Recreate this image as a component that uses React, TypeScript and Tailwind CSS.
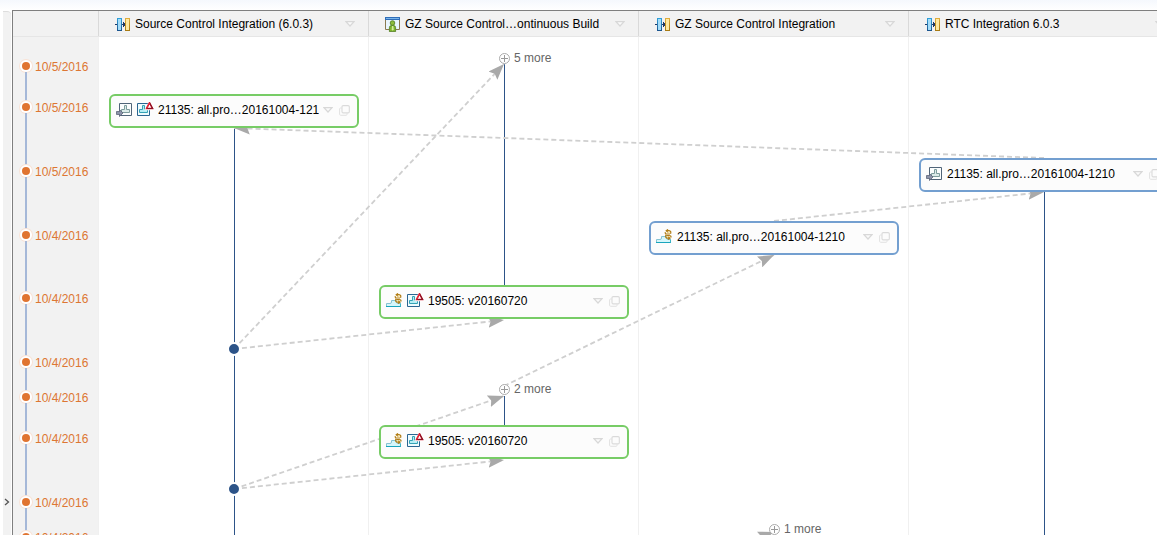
import type { ReactNode } from "react";

type IconKind = "deliver" | "warning" | "baseline";

function IntegrationIcon() {
  return (
    <svg width="16" height="16" viewBox="0 0 16 16" className="shrink-0" shapeRendering="crispEdges" aria-hidden="true">
      <defs>
        <linearGradient id="blueBar" x1="0" y1="0" x2="0" y2="1">
          <stop offset="0" stopColor="#2f9fd8" />
          <stop offset="1" stopColor="#1d5790" />
        </linearGradient>
        <linearGradient id="goldBar" x1="0" y1="0" x2="0" y2="1">
          <stop offset="0" stopColor="#e0ac3c" />
          <stop offset="1" stopColor="#a87b14" />
        </linearGradient>
      </defs>
      <path d="M0 8h3v1H0z" fill="#1f3864" />
      <rect x="2.5" y="2.5" width="4" height="12" fill="#a5dcf8" stroke="url(#blueBar)" />
      <rect x="10.5" y="2.5" width="4" height="12" fill="#ffe9a0" stroke="url(#goldBar)" />
      <path d="M7 8h3v1H7zM8 6h1v5H8zM9 7h1v3H9z" fill="#1f3864" />
    </svg>
  );
}

function StreamIcon() {
  return (
    <svg width="16" height="16" viewBox="0 0 16 16" className="shrink-0" aria-hidden="true">
      <path d="M.5 1.500h14v12H.5z" fill="#e9f5fd" stroke="#8a7a50" />
      <path d="M0 1h15v3H0z" fill="#2f6db8" />
      <path d="M1 2h13v1H1z" fill="#79b4ea" />
      <path d="M4 13h7v2H4z" fill="#f2f2f2" />
      <path d="M4.400 15.600v-4q0-2 2-2h2.200q2 0 2 2v4z" fill="#7fb52e" stroke="#4c7a1c" strokeWidth=".8" />
      <circle cx="7.500" cy="7" r="2.300" fill="#8cbc3c" stroke="#4c7a1c" strokeWidth=".8" />
      <path d="M7 10h1.300l.4 3.500-1 1.200-1-1.200z" fill="#d5ee9c" />
    </svg>
  );
}

function DeliverIcon() {
  return (
    <svg width="16" height="16" viewBox="0 0 16 16" className="shrink-0" aria-hidden="true">
      <path d="M3.500 1.500h12v12h-12z" fill="#fbfdfd" stroke="#506478" />
      <path d="M8.500 3.500h2v4h3v3h-8v-3h3z" fill="#dcebe9" stroke="#7d9c9c" />
      <path d="M.5 9.500h3v-2l3.500 3.500-3.500 3.500v-2h-3z" fill="#8c93a8" stroke="#5c6378" strokeWidth=".8" />
    </svg>
  );
}

function WarningIcon() {
  return (
    <svg width="17" height="16" viewBox="0 0 17 16" className="-mr-px shrink-0" aria-hidden="true">
      <path d="M.5 1.500h12v12H.5z" fill="#effbfd" stroke="#2b6591" />
      <path d="M5.500 3.500h2v4h3v3h-8v-3h3z" fill="#b5edf4" stroke="#35a2b5" />
      <path d="M12.500 1l3.300 6H9.200z" fill="#fff" stroke="#fff" strokeWidth="2.500" />
      <path d="M12.500.8l3 5.700h-6z" fill="#fff" stroke="#d51a2e" strokeWidth="1.400" />
      <path d="M12.600 .8l3 5.700h-6" fill="none" stroke="#8c1224" strokeWidth="1.200" />
      <path d="M12.500 .8l-3 5.700" stroke="#e3263a" strokeWidth="1.400" />
    </svg>
  );
}

function BaselineIcon() {
  return (
    <svg width="16" height="16" viewBox="0 0 16 16" className="shrink-0" aria-hidden="true">
      <path d="M.5 13.500v-3H4q1.500 0 1.500-1.500V7.500h5V9q0 1.500 1.500 1.500h2.500v3z" fill="#d5f6fa" stroke="#86c3d2" />
      <path d="M0 13h15v1H0z" fill="#1aa5bd" />
      <path d="M14.500 10.500v3" stroke="#3db4c7" />
      <path
        d="M14.500 4.800Q15.500 2 13 1.700H10.500M12 .4L10.200 1.800 12 3.400M9.300 3.200Q9 5 11 5H14M10 5.800Q8.800 9.200 11.500 9.200H13M12.200 7.600L14 9.200 12.200 10.600M15 8.500Q15.300 6.500 13 6.500H10.500"
        fill="none"
        stroke="#b17d15"
        strokeWidth="1.200"
      />
      <path d="M11.500 3.300h2M11 7.800h1.500" stroke="#f8d774" />
    </svg>
  );
}

function Triangle() {
  return (
    <svg width="10" height="6" viewBox="0 0 10 6" className="block" aria-hidden="true">
      <path d="M1 .7h8L5 5z" fill="#fafafa" stroke="#d8d8d8" strokeWidth="1.200" />
    </svg>
  );
}

function CopyIcon() {
  return (
    <svg width="11" height="11" viewBox="0 0 11 11" className="block" aria-hidden="true">
      <rect x="3" y=".6" width="7.300" height="7.300" rx="1.200" fill="none" stroke="#dadada" strokeWidth="1.100" />
      <path d="M3 3H1.600Q.6 3 .6 4v5.300q0 1 1 1H7q1 0 1-1V8" fill="none" stroke="#e2e2e2" />
    </svg>
  );
}

const icons: Record<IconKind, ReactNode> = {
  deliver: <DeliverIcon />,
  warning: <WarningIcon />,
  baseline: <BaselineIcon />,
};

const columns = [
  { title: "Source Control Integration (6.0.3)", icon: <IntegrationIcon /> },
  { title: "GZ Source Control…ontinuous Build", icon: <StreamIcon /> },
  { title: "GZ Source Control Integration", icon: <IntegrationIcon /> },
  { title: "RTC Integration 6.0.3", icon: <IntegrationIcon /> },
];

const dates = [
  { label: "10/5/2016", row: "h-[41px]" },
  { label: "10/5/2016", row: "h-16" },
  { label: "10/5/2016", row: "h-16" },
  { label: "10/4/2016", row: "h-[63px]" },
  { label: "10/4/2016", row: "h-16" },
  { label: "10/4/2016", row: "h-[35px]" },
  { label: "10/4/2016", row: "h-[41px]" },
  { label: "10/4/2016", row: "h-16" },
  { label: "10/4/2016", row: "h-[35px]" },
  { label: "10/4/2016", row: "h-16" },
];

const cards: { label: string; icons: IconKind[]; place: string; color: string }[] = [
  { label: "21135: all.pro…20161004-1210", icons: ["deliver", "warning"], place: "left-[11px] top-[57px]", color: "border-[#77cc66]" },
  { label: "21135: all.pro…20161004-1210", icons: ["deliver"], place: "left-[821px] top-[121px]", color: "border-[#739fd0]" },
  { label: "21135: all.pro…20161004-1210", icons: ["baseline"], place: "left-[551px] top-[184px]", color: "border-[#739fd0]" },
  { label: "19505: v20160720", icons: ["baseline", "warning"], place: "left-[281px] top-[248px]", color: "border-[#77cc66]" },
  { label: "19505: v20160720", icons: ["baseline", "warning"], place: "left-[281px] top-[388px]", color: "border-[#77cc66]" },
];

const groups = [
  { label: "5 more", place: "left-[401px] top-[13px]" },
  { label: "2 more", place: "left-[401px] top-[344px]" },
  { label: "1 more", place: "left-[671px] top-[484px]" },
];

const flows = [
  "M136 312L406 27",
  "M136 312L406 283",
  "M946 121L136 91",
  "M676 184L946 155",
  "M406 349L676 218",
  "M136 452L406 359",
  "M136 452L406 423",
  "M406 590L676 495",
];

function FlowLines() {
  return (
    <svg width="1080" height="600" className="absolute left-0 top-0" aria-hidden="true">
      <defs>
        <marker id="arrow" markerWidth="16" markerHeight="12" refX="16" refY="6" orient="auto" markerUnits="userSpaceOnUse">
          <path d="M0 0L16 6L0 12L2.500 6z" fill="#a9a9a9" />
        </marker>
      </defs>
      <path d="M136.500 91V600M406.500 27V250M406.500 359V390M946.500 153V600" stroke="#2d5488" fill="none" />
      {flows.map((d) => (
        <path key={d} d={d} stroke="#cfcfcf" strokeWidth="1.800" strokeDasharray="5 3" fill="none" markerEnd="url(#arrow)" />
      ))}
      {[312, 452].map((y) => (
        <circle key={y} cx="136" cy={y} r="6" fill="#2d5488" stroke="#fff" strokeWidth="2" />
      ))}
    </svg>
  );
}

export default function App() {
  return (
    <div className="flex h-screen flex-col overflow-hidden bg-white font-['Liberation_Sans',Arial,sans-serif] text-xs text-black">
      <div className="h-2.5 shrink-0 bg-linear-to-b from-[#f5f8fd] to-white" />
      <div className="flex min-h-0 flex-1">
        <aside className="mr-px ml-[3px] mt-px w-2 shrink-0 overflow-hidden rounded-tr border-t border-[#dddddd] bg-[#f2f2f2]">
          <button type="button" aria-label="Expand sidebar" className="mt-[486px] flex w-full justify-center">
            <svg width="6" height="8" viewBox="0 0 6 8" aria-hidden="true">
              <path d="M1 1l3.500 3L1 7" fill="none" stroke="#555" strokeWidth="1.300" />
            </svg>
          </button>
        </aside>

        <main className="flex min-w-0 flex-1 flex-col overflow-hidden border-l border-t border-[#7f7f7f]">
          <header className="grid h-[26px] shrink-0 grid-cols-[85px_repeat(4,270px)] border-b border-[#e6e6e6] bg-[#f2f2f2]">
            <div />
            {columns.map((column) => (
              <div key={column.title} className="flex items-center border-l border-[#d9d9d9] pl-4 pr-[13px]">
                {column.icon}
                <h2 className="ml-1 flex-1 whitespace-nowrap">{column.title}</h2>
                <button type="button" aria-label={`${column.title} menu`}>
                  <Triangle />
                </button>
              </div>
            ))}
          </header>

          <div className="grid min-h-0 flex-1 grid-cols-[85px_1080px]">
            <ol className="overflow-hidden bg-[#f2f2f2] pl-2 pt-[23px] text-[#dd7733]">
              {dates.map((date, index) => (
                <li key={index} className={`flex gap-1 ${date.row}`}>
                  <span className="flex w-2.5 flex-col items-center">
                    <span className="flex size-3 shrink-0 items-center justify-center rounded-full bg-white ring-1 ring-[#f9e3d6]">
                      <span className="size-2 rounded-full bg-[#e07430]" />
                    </span>
                    <span className="w-0.5 flex-1 bg-[#a5b8d8]" />
                  </span>
                  <time className="leading-[14px]">{date.label}</time>
                </li>
              ))}
            </ol>

            <section className="relative grid grid-cols-4 overflow-hidden" aria-label="Flow diagram">
              {columns.map((column) => (
                <div key={column.title} className="border-l border-[#f0f0f0]" />
              ))}
              <FlowLines />
              {cards.map((card) => (
                <article
                  key={card.place}
                  className={`absolute flex h-[34px] w-[250px] items-center gap-1 rounded-md border-2 bg-[#fcfcfc] pb-0.5 pl-[5px] pr-[7px] ${card.place} ${card.color}`}
                >
                  {card.icons.map((kind) => (
                    <span key={kind} className="w-[17px] shrink-0">
                      {icons[kind]}
                    </span>
                  ))}
                  <a href="#details" className="min-w-0 flex-1 overflow-hidden whitespace-nowrap leading-4">
                    {card.label}
                  </a>
                  <button type="button" aria-label="Menu">
                    <Triangle />
                  </button>
                  <button type="button" aria-label="Copy" className="ml-0.5">
                    <CopyIcon />
                  </button>
                </article>
              ))}
              {groups.map((group) => (
                <button
                  key={group.label}
                  type="button"
                  className={`absolute flex items-center gap-1 whitespace-nowrap leading-4 text-[#666666] ${group.place}`}
                >
                  <svg width="11" height="11" viewBox="0 0 11 11" aria-hidden="true">
                    <circle cx="5.500" cy="5.500" r="5" fill="#fff" stroke="#aaa" />
                    <path d="M5.500 2v7M2 5.500h7" stroke="#999" />
                  </svg>
                  {group.label}
                </button>
              ))}
            </section>
          </div>
        </main>
      </div>
    </div>
  );
}
